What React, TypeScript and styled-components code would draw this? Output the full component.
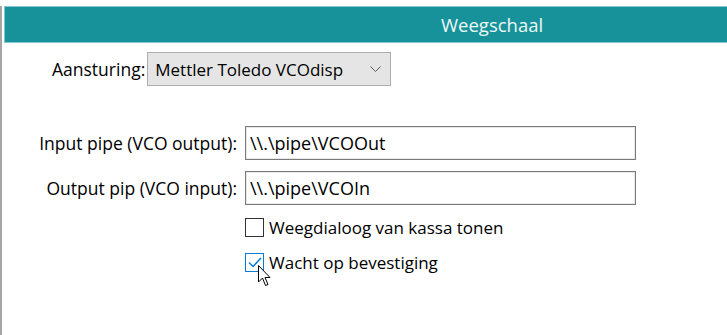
import React from "react";
import styled, { createGlobalStyle } from "styled-components";

const Global = createGlobalStyle`
  html, body { margin: 0; padding: 0; background: #ffffff; }
  body { font-family: "Open Sans", "Noto Sans", sans-serif; color: #000; }
  * { box-sizing: border-box; }
`;

const Page = styled.div`
  position: relative;
  width: 727px;
  height: 335px;
  padding-top: 6px;
  overflow: hidden;
`;

const Frame = styled.div`
  height: 329px;
  border-left: 2px solid #a6a6a6;
  padding-left: 2px;
  display: flex;
  flex-direction: column;
`;

const Header = styled.div`
  height: 37px;
  background: #17929a;
  border: 1px solid #86c9cc;
  border-right: none;
  display: flex;
  align-items: center;
  padding-left: 436px;
  color: #eef8f8;
  font-size: 18.5px;
`;

const Body = styled.div`
  display: flex;
  flex-direction: column;
`;

const DriverRow = styled.div`
  display: flex;
  align-items: center;
  margin-top: 9px;
  padding-left: 48px;
  gap: 2px;
  font-size: 17.5px;
`;

const Combo = styled.div`
  width: 244px;
  height: 34px;
  background: #e5e5e5;
  border: 1px solid #adadad;
  display: flex;
  align-items: center;
  justify-content: space-between;
  padding: 0 9px 0 7px;
  font-size: 17px;
`;

const Grid = styled.div`
  display: grid;
  grid-template-columns: 233px 391px;
  column-gap: 8px;
  row-gap: 11px;
  margin-top: 40px;
  align-items: center;
  font-size: 17.5px;
`;

const Label = styled.div`
  text-align: right;
  white-space: nowrap;
`;

const TextInput = styled.div`
  height: 34px;
  border: 1px solid #7a7a7a;
  box-shadow: inset 0 0 0 1px #e8e8e8;
  display: flex;
  align-items: center;
  padding-left: 4px;
  background: #fff;
  font-size: 18px;
`;

const CheckList = styled.div`
  display: flex;
  flex-direction: column;
  gap: 16px;
  padding-left: 241px;
  margin-top: 13px;
  font-size: 17px;
`;

const CheckRow = styled.div`
  display: flex;
  align-items: center;
  gap: 5px;
  height: 19px;
`;

const Box = styled.div<{ $checked?: boolean }>`
  width: 19px;
  height: 19px;
  border: 1.5px solid ${(p) => (p.$checked ? "#0a79d6" : "#333333")};
  background: #fff;
  display: flex;
  align-items: center;
  justify-content: center;
`;

const Cursor = styled.svg`
  position: absolute;
  left: 258px;
  top: 265px;
`;

export default function App() {
  return (
    <>
      <Global />
      <Page>
        <Frame>
          <Header>Weegschaal</Header>
          <Body>
            <DriverRow>
              <span>Aansturing:</span>
              <Combo>
                <span>Mettler Toledo VCOdisp</span>
                <svg width="11" height="6" viewBox="0 0 11 6">
                  <path d="M0.5 0.5 L5.5 5.5 L10.5 0.5" fill="none" stroke="#5a5a5a" strokeWidth="1" />
                </svg>
              </Combo>
            </DriverRow>
            <Grid>
              <Label>Input pipe (VCO output):</Label>
              <TextInput>\\.\pipe\VCOOut</TextInput>
              <Label>Output pip (VCO input):</Label>
              <TextInput>\\.\pipe\VCOIn</TextInput>
            </Grid>
            <CheckList>
              <CheckRow>
                <Box />
                <span>Weegdialoog van kassa tonen</span>
              </CheckRow>
              <CheckRow>
                <Box $checked>
                  <svg width="14" height="11" viewBox="0 0 14 11">
                    <path d="M1 5.5 L5 9.5 L13 1" fill="none" stroke="#0a79d6" strokeWidth="1.5" />
                  </svg>
                </Box>
                <span>Wacht op bevestiging</span>
              </CheckRow>
            </CheckList>
          </Body>
        </Frame>
        <Cursor width="13" height="22" viewBox="0 0 13 22">
          <path
            d="M0.5 0.5 L0.5 17 L4.5 13 L7.5 20.5 L10 19.5 L7 12.5 L12 12.5 Z"
            fill="#fff"
            stroke="#000"
            strokeWidth="1"
            strokeLinejoin="miter"
          />
        </Cursor>
      </Page>
    </>
  );
}
